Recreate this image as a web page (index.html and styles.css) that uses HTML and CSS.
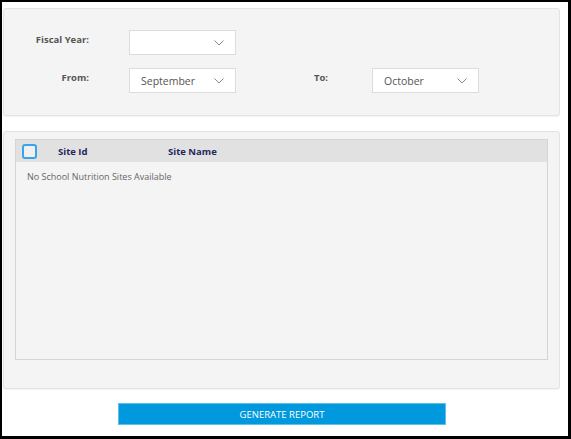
FILE: index.html
```html
<!DOCTYPE html>
<html>
<head>
<meta charset="utf-8">
<link rel="stylesheet" href="styles.css">
</head>
<body>
<div class="frame">
  <div class="panel filters">
    <div class="row row-first">
      <div class="label">Fiscal Year:</div>
      <div class="select"><span class="value"></span><svg class="chev" width="10" height="6" viewBox="0 0 10 6"><path d="M0.5 0.5 L5 5 L9.5 0.5" fill="none" stroke="#888" stroke-width="1"/></svg></div>
    </div>
    <div class="row">
      <div class="label">From:</div>
      <div class="select"><span class="value">September</span><svg class="chev" width="10" height="6" viewBox="0 0 10 6"><path d="M0.5 0.5 L5 5 L9.5 0.5" fill="none" stroke="#888" stroke-width="1"/></svg></div>
      <div class="label label-to">To:</div>
      <div class="select"><span class="value">October</span><svg class="chev" width="10" height="6" viewBox="0 0 10 6"><path d="M0.5 0.5 L5 5 L9.5 0.5" fill="none" stroke="#888" stroke-width="1"/></svg></div>
    </div>
  </div>
  <div class="panel sites">
    <div class="table">
      <div class="thead">
        <span class="checkbox"></span>
        <span class="th th-id">Site Id</span>
        <span class="th th-name">Site Name</span>
      </div>
      <div class="tbody">
        <div class="empty">No School Nutrition Sites Available</div>
      </div>
    </div>
  </div>
  <div class="actions">
    <button class="btn">GENERATE REPORT</button>
  </div>
</div>
</body>
</html>
```
FILE: styles.css
```css
html, body {
  margin: 0;
  padding: 0;
  background: #fff;
}
body {
  font-family: "Open Sans", "Noto Sans", "Liberation Sans", sans-serif;
}
.frame {
  box-sizing: border-box;
  width: 571px;
  height: 439px;
  border: 2px solid #000;
  border-right-width: 3px;
  border-bottom-width: 3px;
  padding: 6px 8px 0 1px;
  display: flex;
  flex-direction: column;
}
.panel {
  background: #f4f4f4;
  border: 1px solid #e3e3e3;
  border-radius: 3px;
  box-shadow: 0 1px 1px rgba(0,0,0,0.05);
}
.filters {
  box-sizing: border-box;
  height: 108px;
  padding-top: 21px;
}
.row {
  display: flex;
  align-items: flex-start;
  height: 25px;
}
.row + .row {
  margin-top: 13px;
}
.label {
  width: 85px;
  text-align: right;
  font-size: 9.5px;
  font-weight: 700;
  color: #555;
  line-height: 20px;
  margin-right: 40px;
}
.label-to {
  width: 92px;
  margin-right: 44px;
}
.select {
  box-sizing: border-box;
  width: 107px;
  height: 25px;
  background: #fff;
  border: 1px solid #dcdcdc;
  display: flex;
  align-items: center;
  padding: 0 11px 0 11px;
}
.value {
  flex: 1;
  font-size: 10.5px;
  color: #555;
}
.chev {
  display: block;
}
.sites {
  box-sizing: border-box;
  height: 258px;
  margin-top: 15px;
  padding: 7px 11px 0 11px;
}
.table {
  box-sizing: border-box;
  height: 221px;
  border: 1px solid #d4d4d4;
  display: flex;
  flex-direction: column;
}
.thead {
  height: 22px;
  background: #e1e1e1;
  display: flex;
  align-items: center;
  padding-left: 6px;
}
.checkbox {
  box-sizing: border-box;
  width: 15px;
  height: 15px;
  border: 2px solid #3ba3ea;
  border-radius: 3px;
  background: #f0f0f0;
}
.th {
  font-size: 9.5px;
  font-weight: 700;
  color: #26275c;
}
.th-id {
  margin-left: 21px;
  width: 110px;
}
.tbody {
  flex: 1;
  background: #f4f4f4;
}
.empty {
  font-size: 9px;
  color: #666;
  padding: 8px 0 0 11px;
}
.actions {
  display: flex;
  padding: 14px 0 0 115px;
}
.btn {
  box-sizing: border-box;
  width: 328px;
  height: 22px;
  background: #0099de;
  border: 1px solid #5cbfec;
  color: #fff;
  font-family: inherit;
  font-size: 9.5px;
  font-weight: 500;
  padding: 0;
  cursor: pointer;
}
```
